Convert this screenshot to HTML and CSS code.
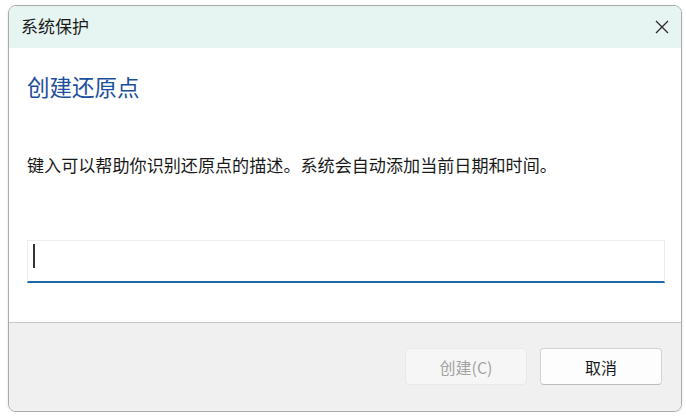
FILE: index.html
```html
<!DOCTYPE html>
<html lang="zh-CN">
<head>
    <meta charset="UTF-8">
    <title>系统保护</title>
    <link rel="stylesheet" href="styles.css">
</head>
<body>
    <div class="window">
        <div class="titlebar">
            <span class="title">系统保护</span>
            <svg class="close" width="14" height="14" viewBox="0 0 14 14">
                <path d="M1 1 L13 13 M13 1 L1 13" stroke="#2b2b2b" stroke-width="1.3" fill="none"/>
            </svg>
        </div>

        <div class="content">
            <h1 class="heading">创建还原点</h1>
            <p class="desc">键入可以帮助你识别还原点的描述。系统会自动添加当前日期和时间。</p>
            <div class="textbox">
                <span class="caret"></span>
            </div>
        </div>

        <div class="footer">
            <button class="button disabled">创建(C)</button>
            <button class="button">取消</button>
        </div>
    </div>
</body>
</html>
```

FILE: styles.css
```css
body {
    margin: 0;
    padding: 5px 4px 0 8px;
    background: #fff;
    font-family: "Noto Sans CJK SC", "Noto Sans", sans-serif;
    color: #1a1a1a;
}
.window {
    box-sizing: border-box;
    width: 674px;
    height: 407px;
    border: 1px solid #ababab;
    border-radius: 8px;
    overflow: hidden;
    display: flex;
    flex-direction: column;
    box-shadow: 0 1px 3px rgba(0, 0, 0, 0.12);
}
.titlebar {
    height: 42px;
    flex: none;
    background: #e6f5f1;
    display: flex;
    align-items: center;
    justify-content: space-between;
    padding: 0 12px 0 12px;
}
.title {
    font-size: 17px;
    line-height: 20px;
    margin-top: -2px;
}
.content {
    flex: 1;
    background: #fff;
    padding: 23px 16px 0 18px;
}
.heading {
    margin: 0;
    font-size: 22.5px;
    font-weight: normal;
    line-height: 30px;
    color: #1d4f9e;
}
.desc {
    margin: 52px 0 0 0;
    font-size: 17.1px;
    line-height: 24px;
}
.textbox {
    box-sizing: border-box;
    margin-top: 63px;
    height: 43px;
    background: #fff;
    border: 1px solid #ededed;
    border-bottom: 2px solid #1f68a6;
    padding: 3px 0 0 5px;
}
.caret {
    display: block;
    width: 2px;
    height: 24px;
    background: #333;
}
.footer {
    height: 89px;
    flex: none;
    background: #f0f0f0;
    border-top: 1px solid #c9c9c9;
    display: flex;
    justify-content: flex-end;
    align-items: flex-start;
    gap: 13px;
    padding: 25px 19px 0 0;
    box-sizing: border-box;
}
.button {
    width: 122px;
    height: 37px;
    border: 1px solid #d3d3d3;
    border-bottom-color: #bdbdbd;
    border-radius: 4px;
    background: #fdfdfd;
    font-family: "Noto Sans CJK SC", "Noto Sans", sans-serif;
    font-size: 16px;
    color: #1a1a1a;
}
.button.disabled {
    background: #f6f6f6;
    border-color: #e9e9e9;
    color: #a3a3a3;
}
```
